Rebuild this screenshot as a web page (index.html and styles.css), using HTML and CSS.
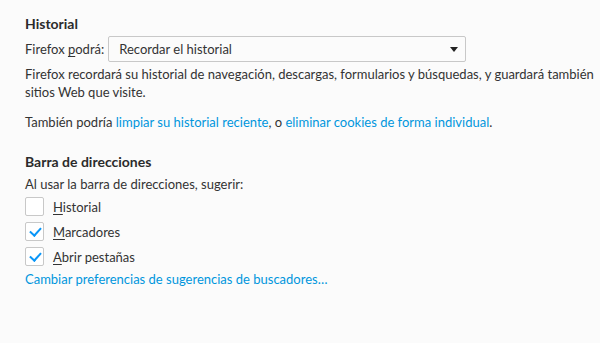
FILE: index.html
```html
<!DOCTYPE html>
<html lang="es">
<head>
    <meta charset="UTF-8">
    <title>Privacidad</title>
    <link rel="stylesheet" href="styles.css">
</head>
<body>
    <div class="prefs">
        <!-- Historial -->
        <section class="group">
            <h2>Historial</h2>
            <div class="select-row">
                <label>Firefox <u>p</u>odrá:</label>
                <div class="select">
                    <span>Recordar el historial</span>
                    <span class="arrow"></span>
                </div>
            </div>
            <p class="desc">Firefox recordará su historial de navegación, descargas, formularios y búsquedas, y guardará también sitios Web que visite.</p>
            <p class="also">También podría <a href="#">limpiar su historial reciente</a>, o <a href="#">eliminar cookies de forma individual</a>.</p>
        </section>

        <!-- Barra de direcciones -->
        <section class="group">
            <h2>Barra de direcciones</h2>
            <div class="hint">Al usar la barra de direcciones, sugerir:</div>
            <label class="check"><span class="box"></span><span><u>H</u>istorial</span></label>
            <label class="check"><span class="box checked"></span><span><u>M</u>arcadores</span></label>
            <label class="check"><span class="box checked"></span><span><u>A</u>brir pestañas</span></label>
            <a class="more" href="#">Cambiar preferencias de sugerencias de buscadores…</a>
        </section>
    </div>
</body>
</html>
```

FILE: styles.css
```css
body {
    margin: 0;
    background-color: #fbfbfb;
    font-family: Lato, sans-serif;
    font-size: 13px;
    color: #333333;
}
.prefs {
    padding: 14px 0 0 25px;
}
.group {
    margin-bottom: 20px;
}
h2 {
    margin: 0;
    font-size: 14px;
    font-weight: bold;
    line-height: 20px;
    color: #2b2b2b;
}
.select-row {
    display: flex;
    align-items: center;
    gap: 4px;
    margin-top: 2px;
}
.select {
    width: 358px;
    height: 26px;
    box-sizing: border-box;
    border: 1px solid #c8c8c8;
    border-radius: 2px;
    background-color: #fbfbfb;
    display: flex;
    align-items: center;
    justify-content: space-between;
    padding: 0 7px 0 10px;
}
.arrow {
    width: 0;
    height: 0;
    border-left: 4px solid transparent;
    border-right: 4px solid transparent;
    border-top: 5px solid #222;
}
.desc {
    margin: 3px 0 0;
    line-height: 18px;
}
.also {
    margin: 12px 0 0;
    line-height: 19px;
}
a {
    color: #0096dd;
    text-decoration: none;
}
.hint {
    line-height: 20px;
    margin-top: 2px;
}
.check {
    display: flex;
    align-items: center;
    gap: 9px;
    height: 25px;
}
.box {
    width: 19px;
    height: 19px;
    box-sizing: border-box;
    border: 1px solid #c8c8c8;
    border-radius: 2px;
    background-color: #fff;
    position: relative;
}
.box.checked::after {
    content: "";
    position: absolute;
    left: 6px;
    top: 2px;
    width: 5px;
    height: 9px;
    border: solid #0996f8;
    border-width: 0 2px 2px 0;
    transform: rotate(42deg);
}
.more {
    display: block;
    line-height: 20px;
}
u {
    text-decoration-thickness: 1px;
    text-underline-offset: 2px;
}
```
